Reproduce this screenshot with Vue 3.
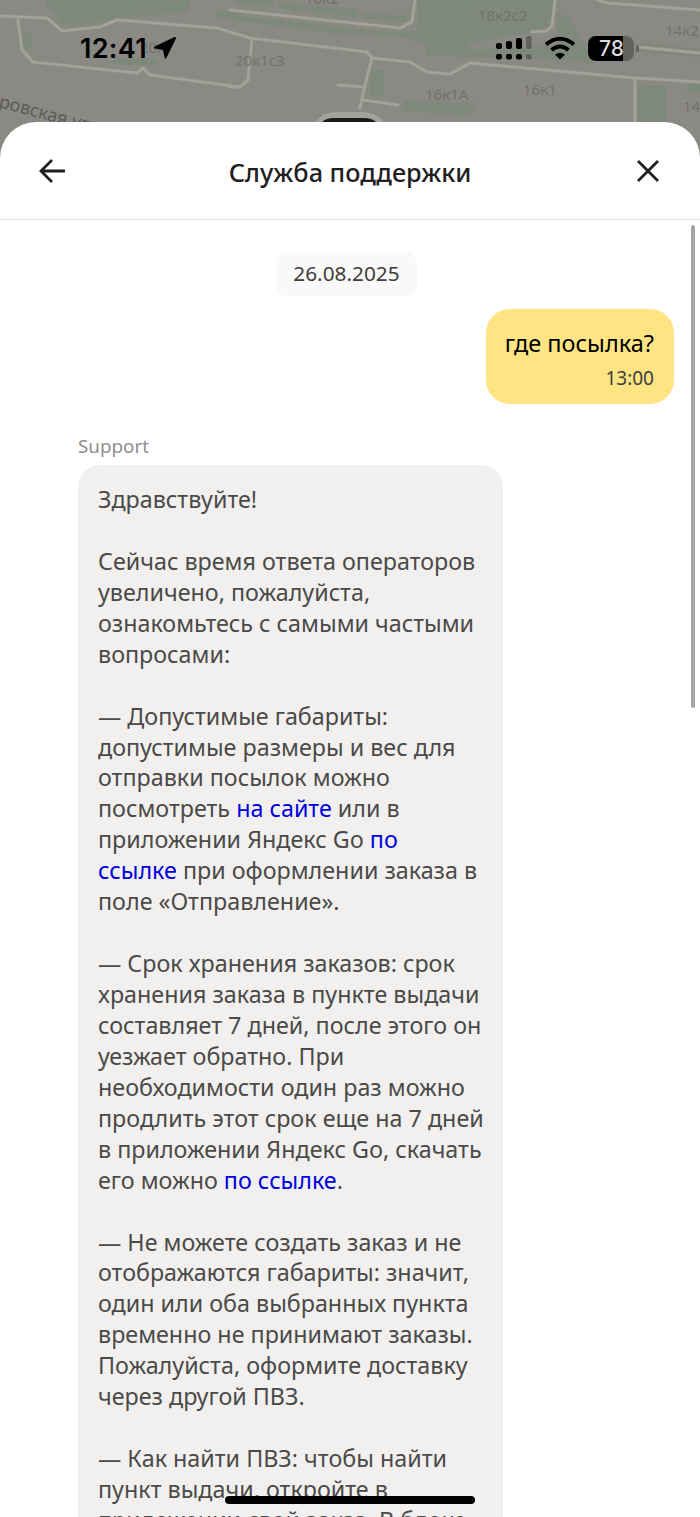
<script setup>
const lines = [
  [{ t: 'Здравствуйте!' }],
  [],
  [{ t: 'Сейчас время ответа операторов' }],
  [{ t: 'увеличено, пожалуйста,' }],
  [{ t: 'ознакомьтесь с самыми частыми' }],
  [{ t: 'вопросами:' }],
  [],
  [{ t: '— Допустимые габариты:' }],
  [{ t: 'допустимые размеры и вес для' }],
  [{ t: 'отправки посылок можно' }],
  [{ t: 'посмотреть ' }, { t: 'на сайте', link: true }, { t: ' или в' }],
  [{ t: 'приложении Яндекс Go ' }, { t: 'по', link: true }],
  [{ t: 'ссылке', link: true }, { t: ' при оформлении заказа в' }],
  [{ t: 'поле «Отправление».' }],
  [],
  [{ t: '— Срок хранения заказов: срок' }],
  [{ t: 'хранения заказа в пункте выдачи' }],
  [{ t: 'составляет 7 дней, после этого он' }],
  [{ t: 'уезжает обратно. При' }],
  [{ t: 'необходимости один раз можно' }],
  [{ t: 'продлить этот срок еще на 7 дней' }],
  [{ t: 'в приложении Яндекс Go, скачать' }],
  [{ t: 'его можно ' }, { t: 'по ссылке', link: true }, { t: '.' }],
  [],
  [{ t: '— Не можете создать заказ и не' }],
  [{ t: 'отображаются габариты: значит,' }],
  [{ t: 'один или оба выбранных пункта' }],
  [{ t: 'временно не принимают заказы.' }],
  [{ t: 'Пожалуйста, оформите доставку' }],
  [{ t: 'через другой ПВЗ.' }],
  [],
  [{ t: '— Как найти ПВЗ: чтобы найти' }],
  [{ t: 'пункт выдачи, откройте в' }],
  [{ t: 'приложении свой заказ. В блоке' }]
]

const roads = [
  'M0 16 L47 18 L62 31 L100 27 L117 20 L217 28 L250 38 L367 52 L372 58 L410 62 L427 72 L450 74 L470 63 L635 78 L700 82',
  'M18 20 L22 50 L33 62 L137 73 L143 68 L150 75 L240 87 L248 80 L252 38',
  'M230 10 L400 28 L412 22 L415 0',
  'M230 87 L240 87',
  'M367 52 L372 58 L365 85 L360 108',
  'M338 85 L362 87',
  'M363 100 L398 105',
  'M635 78 L635 160',
  'M555 0 L552 26 L546 31 L532 32',
  'M598 0 L607 3 L700 10',
  'M637 47 L700 53'
]
</script>

<template>
  <div class="page">
    <div class="top">
      <svg class="map" width="700" height="170" viewBox="0 0 700 170">
        <rect width="700" height="170" fill="#8a8983" />
        <g fill="#7f897b">
          <path d="M45 0H190L188 13L123 17L100 23L60 25L53 10L45 8Z" />
          <path d="M22 33H32V50H22Z" />
          <path d="M113 58H157V65H113Z" />
          <path d="M217 10L240 13V20L217 18Z" />
          <path d="M235 0H273V7L235 5Z" />
          <path d="M277 2L357 9V17L277 8Z" />
          <path d="M360 12L407 16V22L360 18Z" />
          <path d="M230 20L330 33L403 37L425 45L427 55L470 57V43L503 37L532 33L550 30L553 0H417V30L400 33L230 15Z" />
          <path d="M557 13L570 17L593 63L510 57L460 58L470 50L557 45Z" />
          <path d="M372 70H384V97H372Q366 90 372 70Z" />
          <path d="M405 100L476 103Q470 116 460 116L400 110Z" />
          <rect x="638" y="85" width="29" height="60" rx="6" />
          <path d="M687 83H700V93H687Z" />
          <path d="M640 43L700 49V57L640 52Z" />
        </g>
        <g fill="none" stroke-linejoin="round" stroke-linecap="round">
          <path v-for="d in roads" :key="d" :d="d" stroke="#94917f" stroke-width="4" />
          <path v-for="d in roads" :key="d + 'i'" :d="d" stroke="#a3a39d" stroke-width="2.6" />
          <path d="M0 90L90 120" stroke="#94917f" stroke-width="1" />
        </g>
        <path d="M316 122Q322 112 336 112H362Q376 112 384 122Z" fill="#a3a39d" />
        <path d="M322 122Q326 118 334 118H364Q372 118 376 122Z" fill="#1a1a1a" />
        <g class="labels">
          <text x="305" y="4">16к2</text>
          <text x="478" y="21">18к2с2</text>
          <text x="665" y="36">14к2</text>
          <text x="140" y="53">20к</text>
          <text x="235" y="66">20к1с3</text>
          <text x="425" y="100">16к1А</text>
          <text x="523" y="95">16к1</text>
          <text x="683" y="112">14</text>
        </g>
        <text class="street" transform="translate(-2 107) rotate(15)">ровская ул</text>
      </svg>
      <div class="status">
        <div class="time">12:41</div>
        <svg class="arrow" width="24" height="24" viewBox="0 0 24 24">
          <path d="M22 2 L2 11.5 L11 13 L12.5 21.5 Z" fill="#000" stroke="#000" stroke-width="2" stroke-linejoin="round" />
        </svg>
        <div class="status-right">
          <svg width="36" height="24" viewBox="0 0 36 24">
            <g fill="#000">
              <rect x="0" y="7" width="6" height="6" rx="2" />
              <rect x="10" y="5" width="6" height="8" rx="2" />
              <rect x="20" y="2" width="6" height="11" rx="2" />
              <rect x="0" y="18" width="6" height="5.5" rx="2" />
              <rect x="10" y="18" width="6" height="5.5" rx="2" />
              <rect x="20" y="18" width="6" height="5.5" rx="2" />
            </g>
            <g fill="#000" opacity="0.28">
              <rect x="30" y="0" width="5.5" height="13" rx="2" />
              <rect x="30" y="18" width="5.5" height="5.5" rx="2" />
            </g>
          </svg>
          <svg class="wifi" width="32" height="24" viewBox="0 0 32 24">
            <g fill="none" stroke="#000" stroke-width="4">
              <path d="M2 8.5Q16 -3 30 8.5" />
              <path d="M7.5 14Q16 7 24.500 14" />
            </g>
            <path d="M11 18.500Q16 15 21 18.500L16 23.500Z" fill="#000" />
          </svg>
          <div class="battery">78</div>
          <div class="nub"></div>
        </div>
      </div>
    </div>

    <div class="sheet">
      <header class="head">
        <svg width="28" height="26" viewBox="0 0 28 26">
          <path d="M26 13H3M13 2L2 13L13 24" fill="none" stroke="#21201f" stroke-width="2.8" />
        </svg>
        <h1>Служба поддержки</h1>
        <svg width="24" height="24" viewBox="0 0 24 24">
          <path d="M2 2L22 22M22 2L2 22" fill="none" stroke="#21201f" stroke-width="2.8" />
        </svg>
      </header>
      <div class="chat">
        <div class="date">26.08.2025</div>
        <div class="mine">
          <div class="mine-text">где посылка?</div>
          <div class="mine-time">13:00</div>
        </div>
        <div class="author">Support</div>
        <div class="theirs">
          <div v-for="(line, i) in lines" :key="i" class="line">
            <template v-for="(part, j) in line" :key="j">
              <span :class="{ link: part.link }">{{ part.t }}</span>
            </template>
          </div>
        </div>
      </div>
      <div class="scroll"></div>
    </div>
    <div class="home"></div>
  </div>
</template>

<style scoped>
.page {
  position: relative;
  width: 700px;
  height: 1517px;
  overflow: hidden;
  background: #fff;
  font-family: 'Noto Sans', sans-serif;
}
.top {
  position: relative;
  height: 122px;
}
.map {
  position: absolute;
  left: 0;
  top: 0;
}
.labels {
  font-family: 'Noto Sans', sans-serif;
  font-size: 15px;
  fill: #72726c;
}
.street {
  font-family: 'Noto Sans', sans-serif;
  font-size: 18px;
  fill: #5c5c57;
}
.status {
  position: relative;
  display: flex;
  align-items: center;
  height: 96px;
  padding-left: 80px;
}
.time {
  font-family: Inter, sans-serif;
  font-size: 27px;
  font-weight: 600;
  letter-spacing: 0.3px;
  color: #000;
}
.arrow {
  margin-left: 6px;
}
.status-right {
  display: flex;
  align-items: center;
  margin-left: auto;
  padding-right: 61px;
}
.wifi {
  margin-left: 12px;
}
.battery {
  width: 46px;
  height: 25px;
  margin-left: 12px;
  border-radius: 8px;
  background: linear-gradient(to right, #000 35px, #62625e 35px);
  color: #dcdcdc;
  font-family: Inter, sans-serif;
  font-size: 21px;
  font-weight: 500;
  line-height: 25px;
  padding-left: 11px;
  box-sizing: border-box;
}
.nub {
  width: 3px;
  height: 7px;
  margin-left: 2px;
  border-radius: 0 2px 2px 0;
  background: #62625e;
}
.sheet {
  position: relative;
  background: #fff;
  border-radius: 36px 36px 0 0;
  height: 1395px;
}
.head {
  display: flex;
  align-items: center;
  justify-content: space-between;
  height: 97px;
  padding: 0 40px 0 39px;
  border-bottom: 1px solid #e4e4e2;
  box-sizing: content-box;
}
.head h1 {
  margin: 2px 3px 0 0;
  font-size: 25.3px;
  font-weight: 500;
  color: #21201f;
}
.chat {
  display: flex;
  flex-direction: column;
}
.date {
  align-self: center;
  margin: 32px 7px 0 0;
  padding: 0 17px;
  height: 44px;
  line-height: 43px;
  border-radius: 12px;
  background: #f9f9f9;
  font-size: 20.8px;
  color: #3d3d3b;
}
.mine {
  align-self: flex-end;
  margin: 13px 26px 0 0;
  padding: 17px 20px 0 18px;
  width: 188px;
  height: 95px;
  box-sizing: border-box;
  border-radius: 24px;
  background: #fee483;
}
.mine-text {
  font-size: 23.5px;
  line-height: 34px;
  color: #000;
  white-space: nowrap;
  text-align: right;
}
.mine-time {
  margin-top: 6px;
  text-align: right;
  font-size: 19px;
  line-height: 24px;
  color: #3d3d3b;
}
.author {
  margin: 29px 0 0 78px;
  font-size: 18.8px;
  line-height: 26px;
  color: #8f8f8d;
}
.theirs {
  width: 425px;
  margin: 6px 0 0 78px;
  padding: 19px 20px;
  box-sizing: border-box;
  border-radius: 22px;
  background: #f1f0ef;
  font-size: 23.3px;
  line-height: 30.94px;
  color: #4a4a48;
}
.line {
  min-height: 30.94px;
  white-space: nowrap;
}
.link {
  color: #0000e0;
}
.scroll {
  position: absolute;
  left: 691px;
  top: 103px;
  width: 4px;
  height: 483px;
  border-radius: 2px;
  background: #a6a6a6;
}
.home {
  position: absolute;
  left: 225px;
  top: 1496px;
  width: 250px;
  height: 8px;
  border-radius: 4px;
  background: #000;
}
</style>
